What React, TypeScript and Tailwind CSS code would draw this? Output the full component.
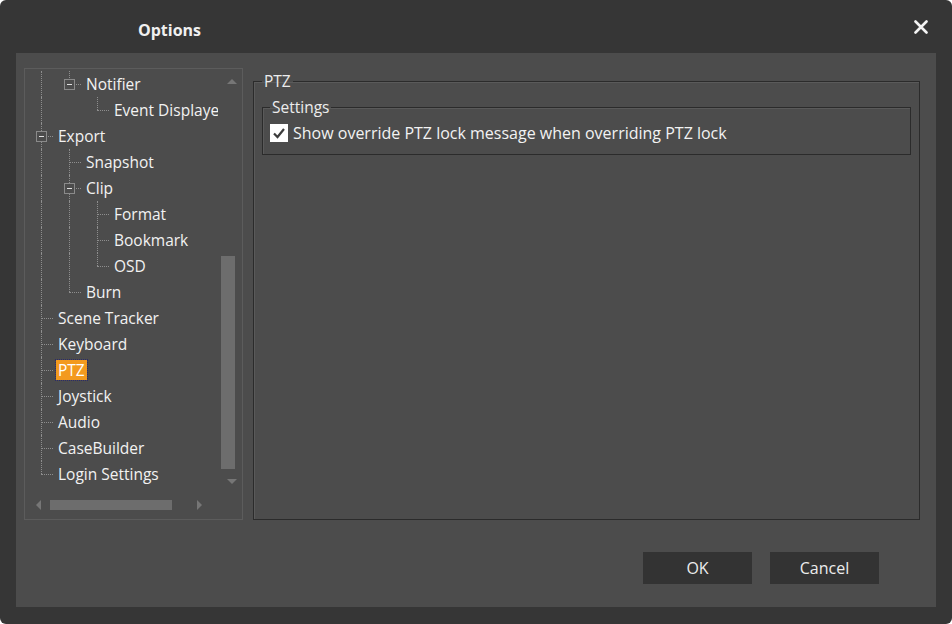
import React from 'react'

type Node = {
  label: string
  depth: number
  guides: boolean[]
  last: boolean
  box?: boolean
  selected?: boolean
}

const nodes: Node[] = [
  { label: 'Notifier', depth: 1, guides: [true], last: true, box: true },
  { label: 'Event Displayer', depth: 2, guides: [true, false], last: true },
  { label: 'Export', depth: 0, guides: [], last: false, box: true },
  { label: 'Snapshot', depth: 1, guides: [true], last: false },
  { label: 'Clip', depth: 1, guides: [true], last: false, box: true },
  { label: 'Format', depth: 2, guides: [true, true], last: false },
  { label: 'Bookmark', depth: 2, guides: [true, true], last: false },
  { label: 'OSD', depth: 2, guides: [true, true], last: true },
  { label: 'Burn', depth: 1, guides: [true], last: true },
  { label: 'Scene Tracker', depth: 0, guides: [], last: false },
  { label: 'Keyboard', depth: 0, guides: [], last: false },
  { label: 'PTZ', depth: 0, guides: [], last: false, selected: true },
  { label: 'Joystick', depth: 0, guides: [], last: false },
  { label: 'Audio', depth: 0, guides: [], last: false },
  { label: 'CaseBuilder', depth: 0, guides: [], last: false },
  { label: 'Login Settings', depth: 0, guides: [], last: true },
]

const font = { fontFamily: '"Open Sans", "Noto Sans", sans-serif' }

function TreeRow({ node }: { node: Node }) {
  return (
    <div className="flex h-[26px] shrink-0 items-center whitespace-nowrap">
      {node.guides.map((on, i) => (
        <div key={i} className="relative h-full w-[28px] shrink-0">
          {on && <div className="absolute left-[14px] top-0 h-full border-l border-dotted border-[#8e8e8e]" />}
        </div>
      ))}
      <div className="relative h-full w-[28px] shrink-0">
        <div
          className={`absolute left-[14px] top-0 border-l border-dotted border-[#8e8e8e] ${node.last ? 'h-[13px]' : 'h-full'}`}
        />
        <div className="absolute left-[14px] top-[13px] w-[12px] border-t border-dotted border-[#8e8e8e]" />
        {node.box && (
          <div className="absolute left-[9px] top-[8px] flex h-[11px] w-[11px] items-center justify-center border border-[#8a8a8a] bg-[#4c4c4c]">
            <div className="h-px w-[5px] bg-[#e0e0e0]" />
          </div>
        )}
      </div>
      {node.selected ? (
        <span className="ml-[1px] bg-[#f39a1e] px-[2px] text-[15.5px] leading-[20px] text-white outline outline-1 outline-dotted outline-[#2a2a6a]">
          {node.label}
        </span>
      ) : (
        <span className="ml-[3px] text-[15.5px] leading-[20px] text-[#f2f2f2]">{node.label}</span>
      )}
    </div>
  )
}

function Arrow({ dir }: { dir: 'up' | 'down' | 'left' | 'right' }) {
  const pts = {
    up: '0,5 5,0 10,5',
    down: '0,0 10,0 5,5',
    left: '5,0 5,10 0,5',
    right: '0,0 0,10 5,5',
  }[dir]
  const vertical = dir === 'up' || dir === 'down'
  return (
    <svg width={vertical ? 10 : 5} height={vertical ? 5 : 10} viewBox={vertical ? '0 0 10 5' : '0 0 5 10'}>
      <polygon points={pts} fill="#767676" />
    </svg>
  )
}

function TreePanel() {
  return (
    <div className="flex h-[452px] w-[219px] shrink-0 flex-col border border-[#5c5c5c]">
      <div className="flex h-[424px]">
        <div className="flex flex-1 flex-col overflow-hidden pl-[2px] pt-[2px]">
          {nodes.map((n) => (
            <TreeRow key={n.label} node={n} />
          ))}
        </div>
        <div className="flex w-[24px] flex-col">
          <div className="flex h-[24px] items-center justify-center pl-[4px] pr-[1px]">
            <Arrow dir="up" />
          </div>
          <div className="flex flex-1 flex-col justify-end pl-[3px] pr-[7px]">
            <div className="h-[213px] bg-[#6d6d6d]" />
          </div>
          <div className="flex h-[24px] items-center justify-center pl-[4px] pr-[1px]">
            <Arrow dir="down" />
          </div>
        </div>
      </div>
      <div className="mt-[7px] flex h-[10px] items-center">
        <div className="flex w-[25px] justify-center pl-[1px]">
          <Arrow dir="left" />
        </div>
        <div className="h-[10px] w-[122px] bg-[#6d6d6d]" />
        <div className="flex-1" />
        <div className="flex w-[30px] justify-start pl-[5px]">
          <Arrow dir="right" />
        </div>
        <div className="w-[20px]" />
      </div>
    </div>
  )
}

function CloseIcon() {
  return (
    <svg width="14" height="14" viewBox="0 0 14 14">
      <path d="M1.5 1.5 L12.5 12.5 M12.5 1.5 L1.5 12.5" stroke="#f4f4f4" strokeWidth="2.6" strokeLinecap="round" />
    </svg>
  )
}

export default function App() {
  return (
    <div className="h-[624px] w-[952px] bg-white" style={font}>
      <div className="flex h-full w-full flex-col overflow-hidden rounded-[6px] bg-[#363636]">
        <div className="flex h-[53px] shrink-0 items-center">
          <div className="ml-[138px] pt-[6px] text-[16px] font-bold text-[#f0f0f0]">Options</div>
          <div className="flex-1" />
          <button className="mr-[21px] flex h-[20px] w-[20px] items-center justify-center">
            <CloseIcon />
          </button>
        </div>

        <div className="mx-[16px] flex h-[554px] flex-col bg-[#4c4c4c]">
          <div className="flex gap-[10px] pl-[8px] pr-[16px] pt-[15px]">
            <TreePanel />

            <fieldset className="mt-[3px] flex-1 border border-[#2b2b2b] px-[8px] pb-0 shadow-[inset_1px_1px_0_#5a5a5a]">
              <legend className="px-[2px] text-[15.5px] leading-[20px] text-[#ececec]">PTZ</legend>
              <div className="h-[418px] pt-[6px]">
                <fieldset className="border border-[#2b2b2b] px-[7px] pb-[11px] shadow-[inset_1px_1px_0_#5a5a5a]">
                  <legend className="px-[2px] text-[15.5px] leading-[20px] text-[#ececec]">Settings</legend>
                  <label className="mt-[6px] flex items-center gap-[5px] text-[16px] leading-[20px] text-[#f2f2f2]">
                    <span className="flex h-[18px] w-[18px] items-center justify-center bg-white">
                      <svg width="14" height="14" viewBox="0 0 14 14">
                        <path d="M2 7.5 L5.5 11 L12 3" fill="none" stroke="#3c3c3c" strokeWidth="2.2" />
                      </svg>
                    </span>
                    Show override PTZ lock message when overriding PTZ lock
                  </label>
                </fieldset>
              </div>
            </fieldset>
          </div>

          <div className="mt-[32px] flex justify-end gap-[18px] pr-[57px]">
            <button className="h-[32px] w-[109px] bg-[#333333] text-[16px] text-[#ececec]">OK</button>
            <button className="h-[32px] w-[109px] bg-[#333333] text-[16px] text-[#ececec]">Cancel</button>
          </div>
        </div>
      </div>
    </div>
  )
}
